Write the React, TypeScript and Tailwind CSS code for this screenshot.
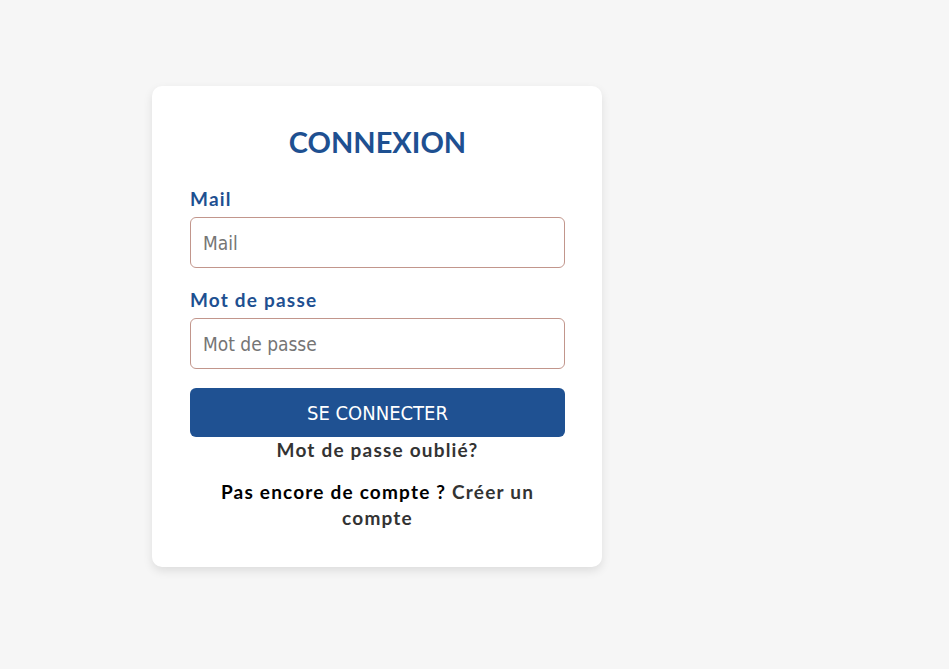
import React, { useState } from "react";

const rounded = "font-['Lato','Noto_Sans',sans-serif] tracking-[1.2px]";
const field = "font-['DejaVu_Sans_Condensed','DejaVu_Sans',sans-serif]";

function Field({ label, type, value, onChange }: { label: string; type: string; value: string; onChange: (v: string) => void }) {
  return (
    <div className="flex flex-col">
      <label className={`${rounded} text-[19px] font-bold text-[#1e5091] leading-6 mb-[6px]`}>{label}</label>
      <input
        type={type}
        value={value}
        placeholder={label}
        onChange={(e) => onChange(e.target.value)}
        className={`${field} h-[51px] w-full rounded-md border border-[#c2968c] px-3 text-[19px] text-[#333] placeholder:text-[#757575] outline-none`}
      />
    </div>
  );
}

export default function App() {
  const [mail, setMail] = useState("");
  const [pwd, setPwd] = useState("");

  return (
    <div className="min-h-[669px] w-full bg-[#f6f6f6] pt-[86px] pl-[152px]">
      <div className="w-[450px] rounded-[10px] bg-white pl-[38px] pr-[37px] pt-[40px] pb-[36px] shadow-[0_4px_10px_rgba(0,0,0,0.1)]">
        <h1 className="font-['Lato','Noto_Sans',sans-serif] text-center text-[29px] font-bold text-[#1e5091] leading-8">CONNEXION</h1>

        <form className="mt-[29px] flex flex-col" onSubmit={(e) => e.preventDefault()}>
          <Field label="Mail" type="email" value={mail} onChange={setMail} />
          <div className="mt-[20px]">
            <Field label="Mot de passe" type="password" value={pwd} onChange={setPwd} />
          </div>
          <button
            type="submit"
            className={`${field} mt-[19px] h-[49px] w-full rounded-md bg-[#1f5192] text-[20px] text-white`}
          >
            SE CONNECTER
          </button>
        </form>

        <p className={`${rounded} mt-[1px] text-center text-[19px] font-bold text-[#333] leading-6`}>
          <a href="#">Mot de passe oublié?</a>
        </p>

        <p className={`${rounded} mx-auto mt-[17px] max-w-[345px] text-center text-[19px] font-bold leading-[26px] text-black`}>
          Pas encore de compte ? <a href="#" className="text-[#333]">Créer un compte</a>
        </p>
      </div>
    </div>
  );
}
